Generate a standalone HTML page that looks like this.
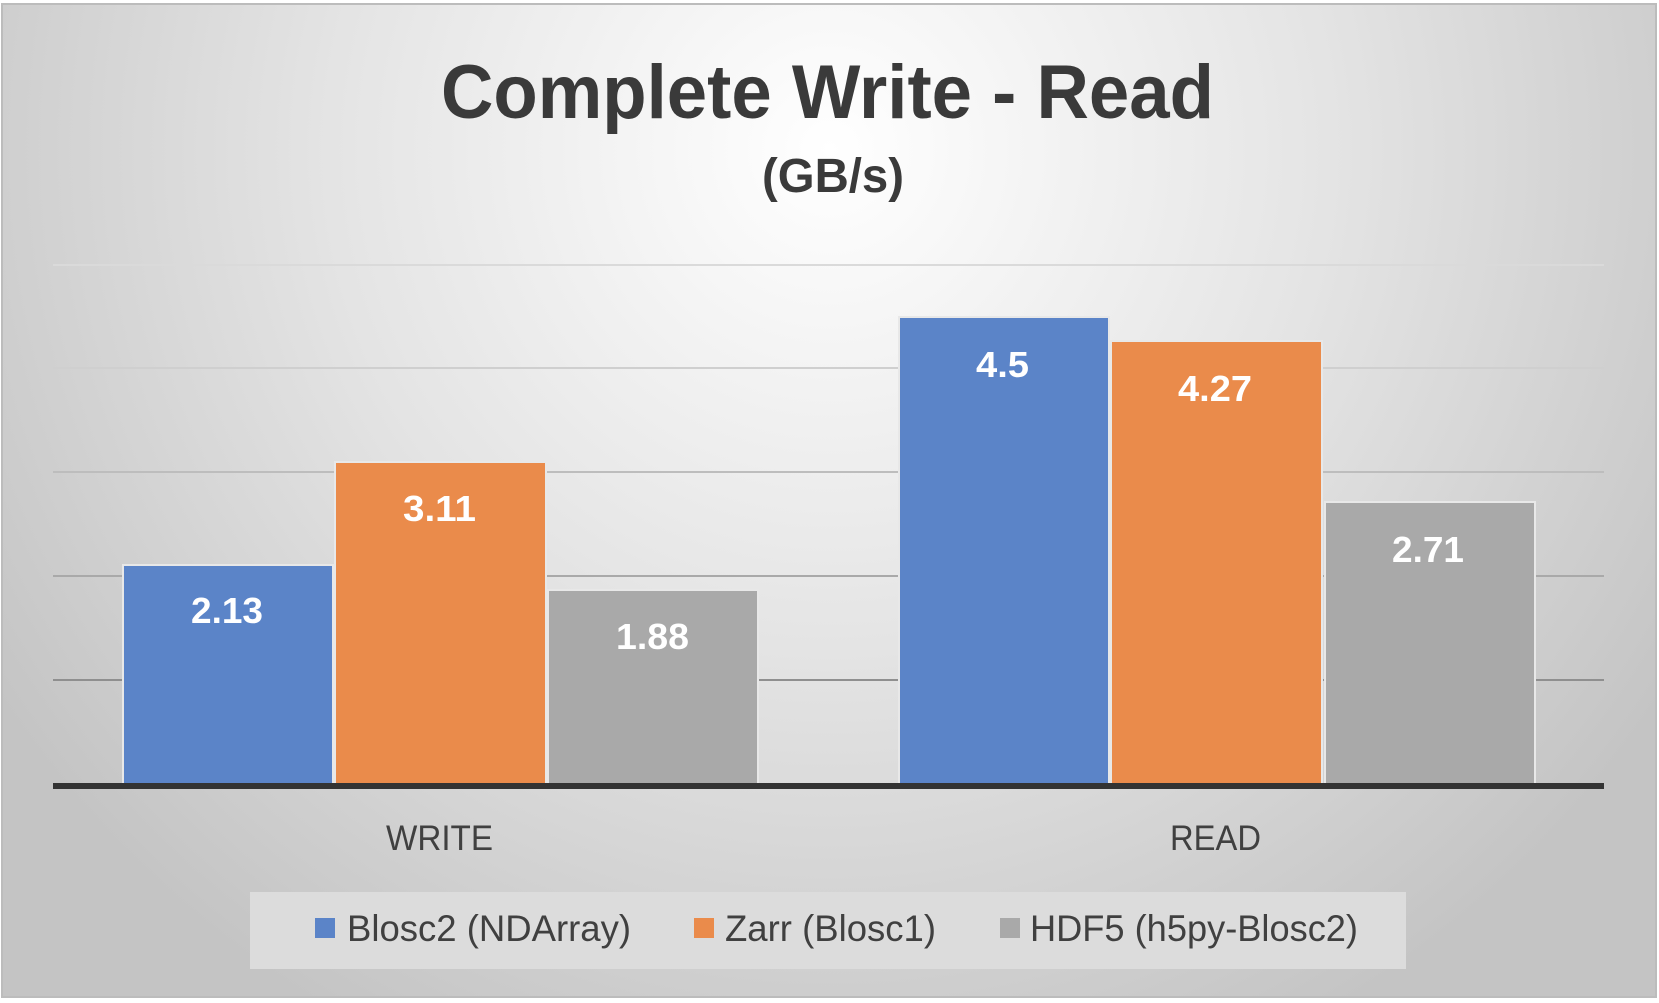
<!DOCTYPE html>
<html><head><meta charset="utf-8"><style>
html,body{margin:0;padding:0;background:#fff;}
svg{display:block;}
text{font-family:"Liberation Sans",sans-serif;}
</style></head><body>
<svg width="1659" height="1003" viewBox="0 0 1659 1003" xmlns="http://www.w3.org/2000/svg">
<defs>
<radialGradient id="bg" cx="830" cy="150" r="1000" gradientUnits="userSpaceOnUse">
<stop offset="0" stop-color="#ffffff"/>
<stop offset="0.5" stop-color="#e4e4e4"/>
<stop offset="1" stop-color="#c4c4c4"/>
</radialGradient>
</defs>
<rect x="0" y="0" width="1659" height="1003" fill="#fff"/>
<rect x="2" y="4" width="1654" height="993" fill="url(#bg)" stroke="#bcbcbc" stroke-width="2"/>
<g stroke="#c8c8c8" stroke-width="2">
<line x1="53" y1="265" x2="1604" y2="265" stroke="#dadada"/>
<line x1="53" y1="368" x2="1604" y2="368" stroke="#cfcfcf"/>
<line x1="53" y1="472" x2="1604" y2="472" stroke="#bdbdbd"/>
<line x1="53" y1="576" x2="1604" y2="576" stroke="#a9a9a9"/>
<line x1="53" y1="680" x2="1604" y2="680" stroke="#8f8f8f"/>
</g>
<g stroke="#e8e8e8" stroke-width="2">
<rect x="123" y="565" width="210" height="220" fill="#5b84c8"/>
<rect x="335" y="462" width="211" height="323" fill="#ea8b4b"/>
<rect x="548" y="590" width="210" height="195" fill="#a9a9a9"/>
<rect x="899" y="317" width="210" height="468" fill="#5b84c8"/>
<rect x="1111" y="341" width="211" height="444" fill="#ea8b4b"/>
<rect x="1325" y="502" width="210" height="283" fill="#a9a9a9"/>
</g>
<rect x="53" y="783" width="1551" height="6" fill="#333"/>
<g fill="#3a3a3a" font-weight="bold" text-anchor="start">
<text x="441" y="118" font-size="76" textLength="773" lengthAdjust="spacingAndGlyphs">Complete Write - Read</text>
<text x="762" y="192" font-size="48" textLength="142" lengthAdjust="spacingAndGlyphs">(GB/s)</text>
</g>
<g fill="#fff" font-weight="bold" font-size="36">
<text x="191" y="623" textLength="72" lengthAdjust="spacingAndGlyphs">2.13</text>
<text x="403" y="521" textLength="73" lengthAdjust="spacingAndGlyphs">3.11</text>
<text x="616" y="649" textLength="73" lengthAdjust="spacingAndGlyphs">1.88</text>
<text x="976" y="377" textLength="53" lengthAdjust="spacingAndGlyphs">4.5</text>
<text x="1178" y="401" textLength="74" lengthAdjust="spacingAndGlyphs">4.27</text>
<text x="1392" y="562" textLength="72" lengthAdjust="spacingAndGlyphs">2.71</text>
</g>
<g fill="#404040" font-size="35">
<text x="386" y="850" textLength="107" lengthAdjust="spacingAndGlyphs">WRITE</text>
<text x="1170" y="850" textLength="91" lengthAdjust="spacingAndGlyphs">READ</text>
</g>
<rect x="250" y="892" width="1156" height="77" fill="#dcdcdc"/>
<rect x="315" y="918" width="20" height="20" fill="#5b84c8"/>
<rect x="694" y="918" width="20" height="20" fill="#ea8b4b"/>
<rect x="1000" y="918" width="20" height="20" fill="#a9a9a9"/>
<g fill="#404040" font-size="37">
<text x="347" y="941" textLength="284" lengthAdjust="spacingAndGlyphs">Blosc2 (NDArray)</text>
<text x="725" y="941" textLength="211" lengthAdjust="spacingAndGlyphs">Zarr (Blosc1)</text>
<text x="1030" y="941" textLength="328" lengthAdjust="spacingAndGlyphs">HDF5 (h5py-Blosc2)</text>
</g>
</svg>
</body></html>
